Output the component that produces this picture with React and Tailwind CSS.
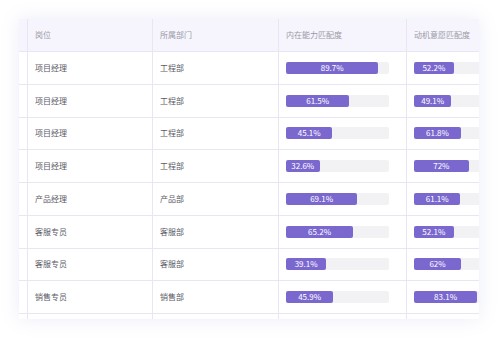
const rows = [
  ["项目经理", "工程部", 89.7, 52.2],
  ["项目经理", "工程部", 61.5, 49.1],
  ["项目经理", "工程部", 45.1, 61.8],
  ["项目经理", "工程部", 32.6, 72],
  ["产品经理", "产品部", 69.1, 61.1],
  ["客服专员", "客服部", 65.2, 52.1],
  ["客服专员", "客服部", 39.1, 62],
  ["销售专员", "销售部", 45.9, 83.1],
];

const font = { fontFamily: '"Noto Sans CJK SC", "Noto Sans", sans-serif' };

function Bar({ value, width }) {
  return (
    <div className={`h-[12px] rounded-[2px] bg-[#f2f2f4] ${width}`}>
      <div
        className="flex h-full items-center justify-center rounded-[2px] bg-[#7b68cf] text-[8px] leading-none text-white"
        style={{ width: `${value}%` }}
      >
        {value}%
      </div>
    </div>
  );
}

function Cells({ children }) {
  return (
    <>
      <div className="w-[9px] shrink-0 border-r border-[#e6e7f1]" />
      {children}
    </>
  );
}

export default function App() {
  return (
    <div className="h-[339px] w-[498px] bg-white pl-[19px] pt-[19px]" style={font}>
      <div className="h-[300px] w-[460px] overflow-hidden bg-white shadow-[0_0_18px_rgba(110,130,210,0.14)]">
        <div className="w-[560px]">
          <div className="flex h-[33px] border-b border-[#e6e7f1] bg-[#f6f5fd] text-[8px] text-[#9a9aa6]">
            <Cells>
              <div className="flex w-[125px] shrink-0 items-center border-r border-[#e6e7f1] pl-[7px]">岗位</div>
              <div className="flex w-[126px] shrink-0 items-center border-r border-[#e6e7f1] pl-[7px]">所属部门</div>
              <div className="flex w-[128px] shrink-0 items-center border-r border-[#e6e7f1] pl-[7px]">内在能力匹配度</div>
              <div className="flex w-[150px] shrink-0 items-center pl-[7px]">动机意愿匹配度</div>
            </Cells>
          </div>
          {rows.map((r, i) => (
            <div key={i} className="flex h-[32.75px] border-b border-[#e6e7f1] text-[8px] text-[#5a5a66]">
              <Cells>
                <div className="flex w-[125px] shrink-0 items-center border-r border-[#e6e7f1] pl-[7px]">{r[0]}</div>
                <div className="flex w-[126px] shrink-0 items-center border-r border-[#e6e7f1] pl-[7px]">{r[1]}</div>
                <div className="flex w-[128px] shrink-0 items-center border-r border-[#e6e7f1] pl-[7px]">
                  <Bar value={r[2]} width="w-[103px]" />
                </div>
                <div className="flex w-[150px] shrink-0 items-center pl-[7px]">
                  <Bar value={r[3]} width="w-[76px]" />
                </div>
              </Cells>
            </div>
          ))}
          <div className="flex h-[32.75px] border-b border-[#e6e7f1]">
            <Cells>
              <div className="w-[125px] shrink-0 border-r border-[#e6e7f1]" />
              <div className="w-[126px] shrink-0 border-r border-[#e6e7f1]" />
              <div className="w-[128px] shrink-0 border-r border-[#e6e7f1]" />
              <div className="w-[150px] shrink-0" />
            </Cells>
          </div>
        </div>
      </div>
    </div>
  );
}
